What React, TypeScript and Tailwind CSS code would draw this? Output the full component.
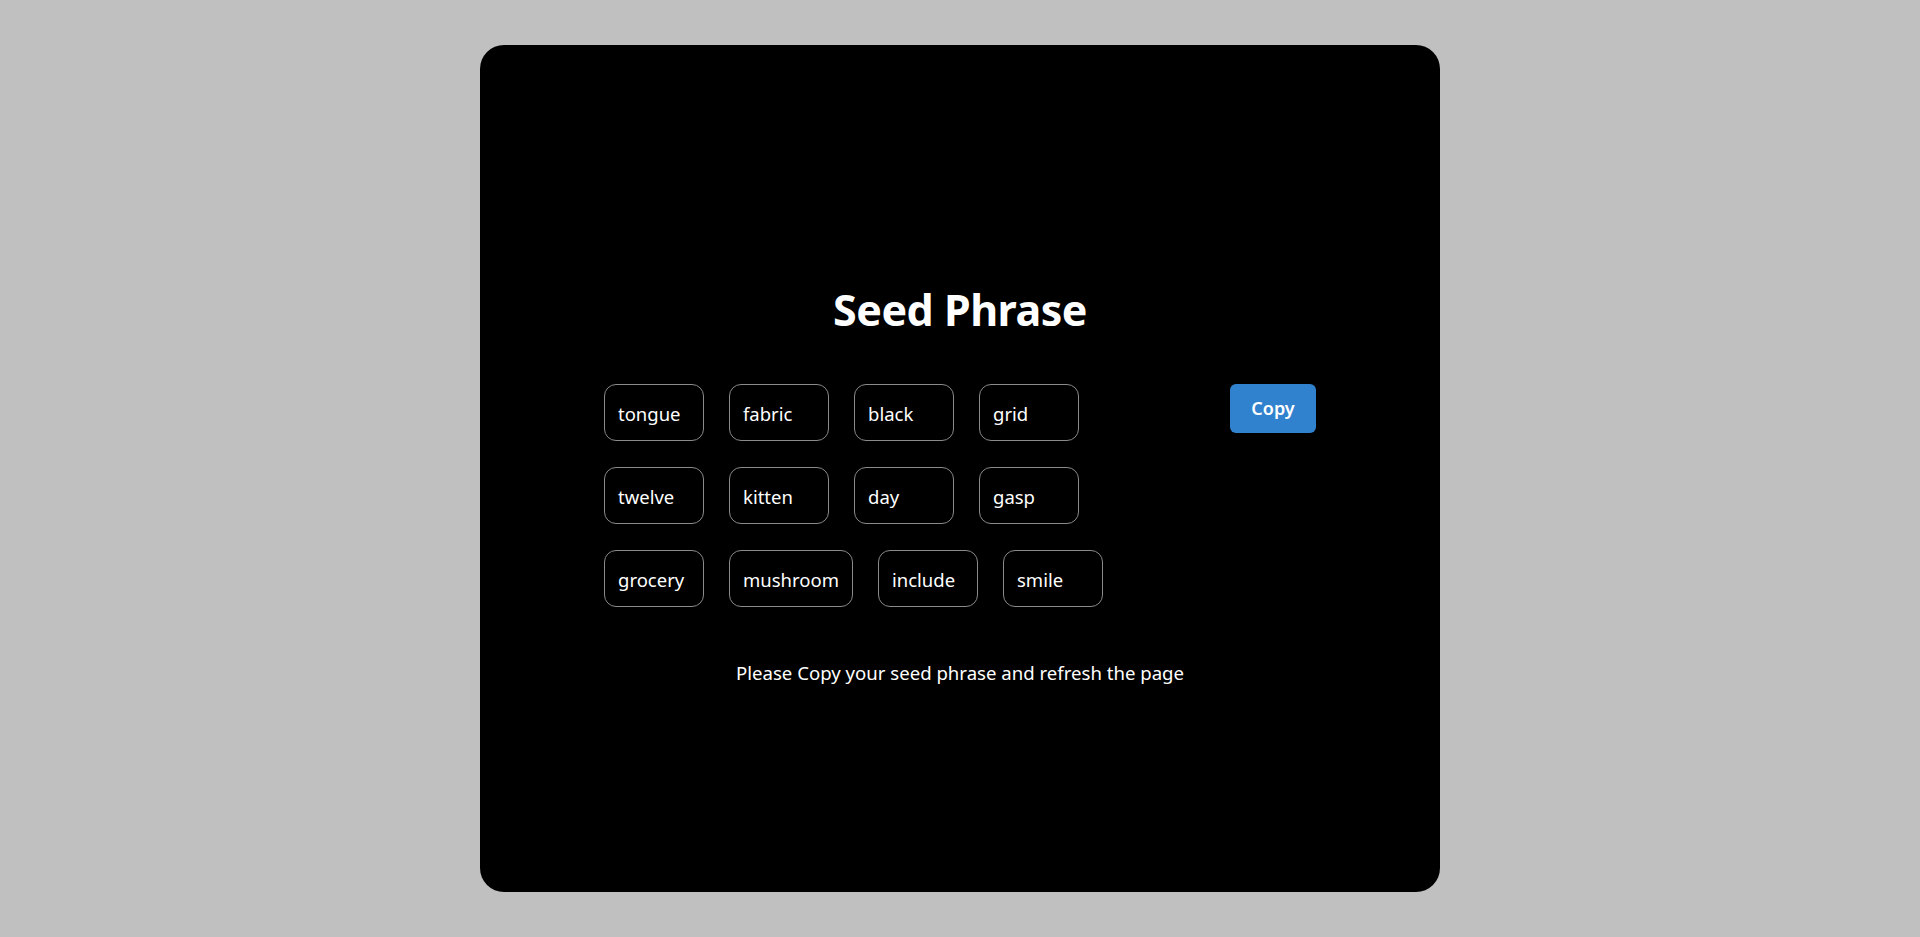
const rows = [
  ['tongue', 'fabric', 'black', 'grid'],
  ['twelve', 'kitten', 'day', 'gasp'],
  ['grocery', 'mushroom', 'include', 'smile'],
];

function Word({ word }: { word: string }) {
  return (
    <div className="min-w-[100px] h-[57px] px-[13px] pt-[2px] flex items-center rounded-[12px] border border-[#8a8a8a] text-white text-[18.5px]">
      {word}
    </div>
  );
}

export default function App() {
  return (
    <div
      className="min-h-screen bg-[#c0c0c0] flex justify-center pt-[45px]"
      style={{ fontFamily: '"Noto Sans", "Open Sans", sans-serif' }}
    >
      <div className="w-[960px] h-[847px] bg-black rounded-[24px] flex flex-col items-center pt-[236px]">
        <h1 className="text-white text-[43px] font-bold leading-[58px] tracking-[-0.5px]">Seed Phrase</h1>

        <div className="w-full px-[124px] mt-[45px] flex justify-between items-start">
          <div className="flex flex-col gap-[26px]">
            {rows.map((r, i) => (
              <div key={i} className="flex gap-[25px]">
                {r.map((w) => (
                  <Word key={w} word={w} />
                ))}
              </div>
            ))}
          </div>
          <button className="w-[86px] h-[49px] rounded-[6px] bg-[#3182ce] text-white text-[18px] font-semibold">
            Copy
          </button>
        </div>

        <p className="mt-[52px] text-white text-[18.6px] leading-[27px]">
          Please Copy your seed phrase and refresh the page
        </p>
      </div>
    </div>
  );
}
